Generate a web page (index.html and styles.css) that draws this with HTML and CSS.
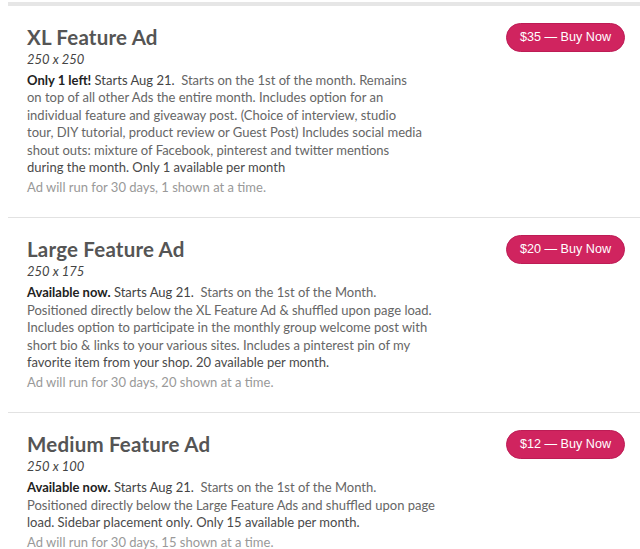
FILE: index.html
```html
<!DOCTYPE html>
<html lang="en">
<head>
<meta charset="utf-8">
<title>Advertise</title>
<link rel="stylesheet" href="styles.css">
</head>
<body>
<div class="ads">
  <div class="ad">
    <div class="info">
      <h2 class="title">XL Feature Ad</h2>
      <div class="size">250 x 250</div>
      <p class="desc"><strong>Only 1 left!</strong> <span class="start">Starts Aug 21.</span>&nbsp; Starts on the 1st of the month. Remains<br>on top of all other Ads the entire month. Includes option for an<br>individual feature and giveaway post. (Choice of interview, studio<br>tour, DIY tutorial, product review or Guest Post) Includes social media<br>shout outs: mixture of Facebook, pinterest and twitter mentions<br><span class="last">during the month. Only 1 available per month</span></p>
      <p class="note">Ad will run for 30 days, 1 shown at a time.</p>
    </div>
    <a class="buy" href="#">$35 — Buy Now</a>
  </div>
  <div class="ad">
    <div class="info">
      <h2 class="title">Large Feature Ad</h2>
      <div class="size">250 x 175</div>
      <p class="desc"><strong>Available now.</strong> <span class="start">Starts Aug 21.</span>&nbsp; Starts on the 1st of the Month.<br>Positioned directly below the XL Feature Ad &amp; shuffled upon page load.<br>Includes option to participate in the monthly group welcome post with<br>short bio &amp; links to your various sites. Includes a pinterest pin of my<br><span class="last">favorite item from your shop. 20 available per month.</span></p>
      <p class="note">Ad will run for 30 days, 20 shown at a time.</p>
    </div>
    <a class="buy" href="#">$20 — Buy Now</a>
  </div>
  <div class="ad">
    <div class="info">
      <h2 class="title">Medium Feature Ad</h2>
      <div class="size">250 x 100</div>
      <p class="desc"><strong>Available now.</strong> <span class="start">Starts Aug 21.</span>&nbsp; Starts on the 1st of the Month.<br>Positioned directly below the Large Feature Ads and shuffled upon page<br><span class="last">load. Sidebar placement only. Only 15 available per month.</span></p>
      <p class="note">Ad will run for 30 days, 15 shown at a time.</p>
    </div>
    <a class="buy" href="#">$12 — Buy Now</a>
  </div>
</div>
</body>
</html>
```

FILE: styles.css
```css
html, body {
  background: #fff;
}
body {
  margin: 2px 0 0 8px;
  font-family: Lato, "Noto Sans", sans-serif;
  color: #666;
}
.ads {
  border-top: 4px solid #e6e6e6;
}
.ad {
  display: flex;
  justify-content: space-between;
  align-items: flex-start;
  padding: 19px 15px 22px 19px;
  border-bottom: 1px solid #e2e2e2;
}
.info {
  width: 450px;
}
.title {
  margin: 0;
  font-size: 20.5px;
  line-height: 24px;
  font-weight: 700;
  color: #555;
  letter-spacing: 0.2px;
}
.size {
  margin-top: 2px;
  font-size: 13px;
  line-height: 16px;
  font-style: italic;
  color: #444;
}
.desc {
  margin: 5px 0 0;
  font-size: 13px;
  line-height: 17.4px;
  color: #666;
}
.desc strong {
  color: #222;
  font-weight: 700;
}
.start {
  color: #444;
}
.last {
  color: #4a4a4a;
}
.note {
  margin: 3px 0 0;
  font-size: 13px;
  line-height: 16px;
  color: #999;
}
.ad:last-child .note {
  margin-top: 2px;
}
.buy {
  flex: none;
  margin-top: -2px;
  display: block;
  padding: 6px 13px 6px;
  border: 1px solid #bd1c55;
  border-radius: 15px;
  background: #d0245f;
  color: #fff;
  font-family: "Liberation Sans", Arial, sans-serif;
  font-size: 12.6px;
  line-height: 15px;
  text-decoration: none;
  white-space: nowrap;
}
```
